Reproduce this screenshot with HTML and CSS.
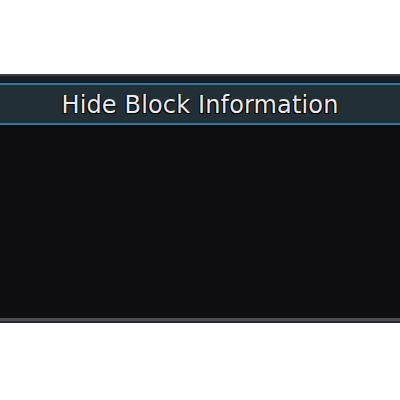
FILE: index.html
```html
<!DOCTYPE html>
<html lang="en">
<head>
<meta charset="UTF-8">
<meta name="viewport" content="width=device-width, initial-scale=1.0">
<title>Block Information</title>
<link rel="stylesheet" href="styles.css">
</head>
<body>
    <div class="panel">
        <div class="panel-top"></div>
        <!-- Header bar -->
        <div class="panel-header">
            <span class="title">Hide Block Information</span>
        </div>
        <div class="panel-body"></div>
        <div class="panel-bottom"></div>
    </div>
</body>
</html>
```

FILE: styles.css
```css
body {
margin: 0;
padding: 0;
background-color: #ffffff;
font-family: "DejaVu Sans", sans-serif;
}

.panel {
margin-top: 74px;
width: 100%;
}

.panel-top {
height: 6px;
background-color: #1e1f24;
border-top: 2px solid #3c3d44;
border-bottom: 1px solid #121316;
}

.panel-header {
height: 38px;
background-color: #232f37;
border-top: 2px solid #2f78a6;
border-bottom: 2px solid #2f78a6;
display: flex;
justify-content: center;
align-items: center;
}

.title {
color: #ebebeb;
font-size: 24px;
letter-spacing: 0.15px;
padding-top: 2px;
text-shadow: -1px 1px 0 #000000, 1px 1px 0 #000000, -1px 0 0 #000000;
}

.panel-body {
height: 193px;
background-color: #0e0e12;
}

.panel-bottom {
height: 3px;
background-color: #4b4e56;
border-bottom: 2px solid #26282c;
}
```
